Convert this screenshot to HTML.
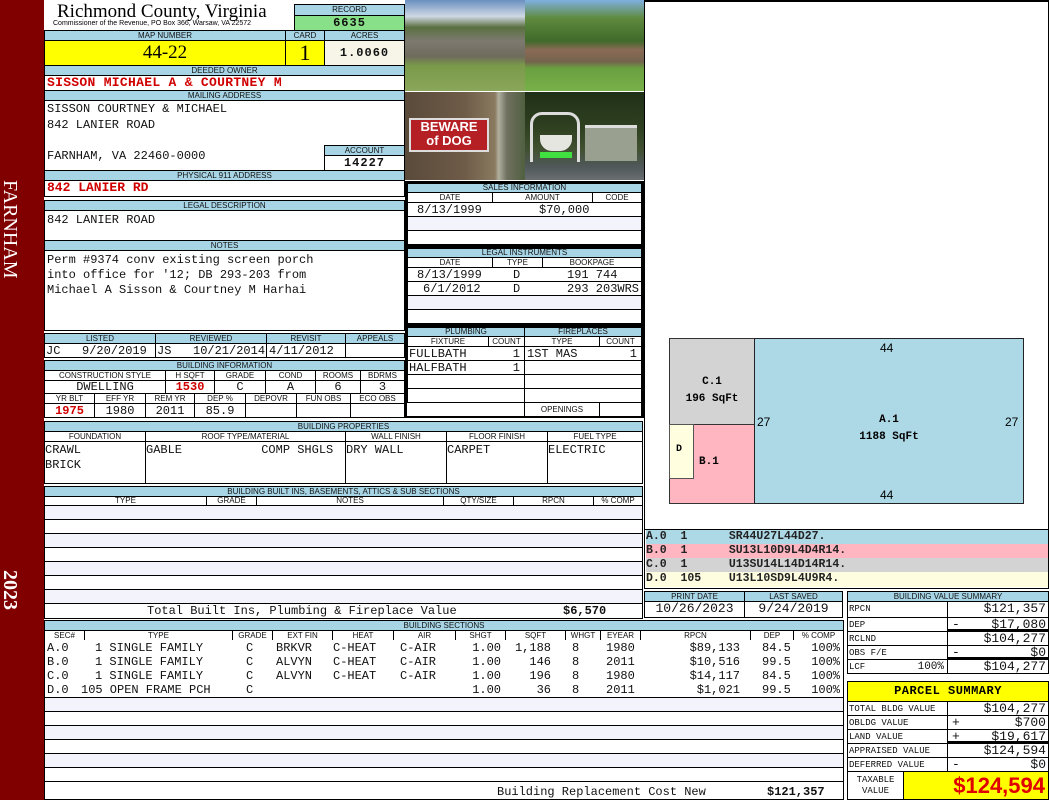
<!DOCTYPE html>
<html><head><meta charset="utf-8"><style>
body{margin:0;width:1050px;height:800px;position:relative;overflow:hidden;background:#fff;font-family:"Liberation Sans",sans-serif}
.a{position:absolute;box-sizing:border-box}
.h{position:absolute;box-sizing:border-box;background:#a8d5e5;border:1px solid #000;font:8px/9px "Liberation Sans",sans-serif;text-align:center;color:#111;white-space:nowrap;overflow:hidden}
.c{position:absolute;box-sizing:border-box;border:1px solid #000;background:#fff;white-space:nowrap;overflow:hidden}
.m{font-family:"Liberation Mono",monospace;font-size:12px;line-height:14px;color:#111}
.r{text-align:right}.ct{text-align:center}
.red{color:#d00000;font-weight:bold}
.sh{background:#f3f3fb}
.row span{position:absolute;top:0}
</style></head><body>
<div class="a" style="left:0;top:0;width:44px;height:800px;background:#800000"></div>
<div class="a" style="left:22px;top:180px;width:0;height:0"><div style="position:absolute;left:-12px;top:0;transform-origin:0 0;transform:rotate(90deg) translate(0,-12px);font:20px/24px 'Liberation Serif',serif;color:#fff;white-space:nowrap;width:120px">FARNHAM</div></div>
<div class="a" style="left:22px;top:570px;width:0;height:0"><div style="position:absolute;left:-12px;top:0;transform-origin:0 0;transform:rotate(90deg) translate(0,-12px);font:bold 20px/24px 'Liberation Serif',serif;color:#fff;white-space:nowrap">2023</div></div>
<div class="a" style="left:57px;top:2px;font:19px/20px 'Liberation Serif',serif;color:#000">Richmond County, Virginia</div>
<div class="a" style="left:53px;top:20px;font:7px/8px 'Liberation Sans',sans-serif">Commissioner of the Revenue, PO Box 366, Warsaw, VA 22572</div>
<div class="h" style="left:294px;top:4px;width:111px;height:12px;line-height:10px">RECORD</div>
<div class="c m ct" style="left:294px;top:15px;width:111px;height:16px;background:#88e088;font-weight:bold;letter-spacing:1px">6635</div>
<div class="h" style="left:44px;top:30px;width:242px;height:11px">MAP NUMBER</div>
<div class="h" style="left:285px;top:30px;width:40px;height:11px">CARD</div>
<div class="h" style="left:324px;top:30px;width:81px;height:11px">ACRES</div>
<div class="c ct" style="left:44px;top:40px;width:242px;height:26px;background:#ffff00;font:19px/24px 'Liberation Serif',serif">44-22</div>
<div class="c ct" style="left:285px;top:40px;width:40px;height:26px;background:#ffff00;font:22px/24px 'Liberation Serif',serif">1</div>
<div class="c m ct" style="left:324px;top:40px;width:81px;height:26px;background:#f7f5e8;font-weight:bold;line-height:24px;letter-spacing:1px">1.0060</div>
<div class="h" style="left:44px;top:65px;width:361px;height:11px">DEEDED OWNER</div>
<div class="c m" style="left:44px;top:75px;width:361px;height:16px;color:#d00000;font-weight:bold;font-size:13px;padding-left:2px;letter-spacing:.3px">SISSON MICHAEL A &amp; COURTNEY M</div>
<div class="h" style="left:44px;top:90px;width:361px;height:11px">MAILING ADDRESS</div>
<div class="c m" style="left:44px;top:100px;width:361px;height:71px;padding:1px 2px;line-height:15.5px">SISSON COURTNEY &amp; MICHAEL<br>842 LANIER ROAD<br><br>FARNHAM, VA 22460-0000</div>
<div class="h" style="left:324px;top:145px;width:81px;height:11px">ACCOUNT</div>
<div class="c m ct" style="left:324px;top:155px;width:81px;height:16px;font-weight:bold;letter-spacing:1px">14227</div>
<div class="h" style="left:44px;top:170px;width:361px;height:11px">PHYSICAL 911 ADDRESS</div>
<div class="c m" style="left:44px;top:180px;width:361px;height:17px;color:#d00000;font-weight:bold;font-size:13px;padding-left:2px">842 LANIER RD</div>
<div class="h" style="left:44px;top:200px;width:361px;height:11px">LEGAL DESCRIPTION</div>
<div class="c m" style="left:44px;top:210px;width:361px;height:31px;padding:2px">842 LANIER ROAD</div>
<div class="h" style="left:44px;top:240px;width:361px;height:11px">NOTES</div>
<div class="c m" style="left:44px;top:250px;width:361px;height:81px;padding:2px;line-height:15px">Perm #9374 conv existing screen porch<br>into office for '12; DB 293-203 from<br>Michael A Sisson &amp; Courtney M Harhai</div>
<div class="h" style="left:44px;top:333px;width:112px;height:11px">LISTED</div>
<div class="h" style="left:155px;top:333px;width:112px;height:11px">REVIEWED</div>
<div class="h" style="left:266px;top:333px;width:80px;height:11px">REVISIT</div>
<div class="h" style="left:345px;top:333px;width:60px;height:11px">APPEALS</div>
<div class="c m" style="left:44px;top:343px;width:112px;height:15px;padding-left:1px">JC &nbsp;&nbsp;9/20/2019</div>
<div class="c m" style="left:155px;top:343px;width:112px;height:15px;padding-left:1px">JS &nbsp;&nbsp;10/21/2014</div>
<div class="c m" style="left:266px;top:343px;width:80px;height:15px;padding-left:2px">4/11/2012</div>
<div class="c m" style="left:345px;top:343px;width:60px;height:15px"></div>
<div class="h" style="left:44px;top:360px;width:361px;height:11px">BUILDING INFORMATION</div>
<div class="h" style="left:44px;top:370px;width:122px;height:11px;background:#fff">CONSTRUCTION STYLE</div>
<div class="h" style="left:165px;top:370px;width:50px;height:11px;background:#fff">H SQFT</div>
<div class="h" style="left:214px;top:370px;width:52px;height:11px;background:#fff">GRADE</div>
<div class="h" style="left:265px;top:370px;width:51px;height:11px;background:#fff">COND</div>
<div class="h" style="left:315px;top:370px;width:46px;height:11px;background:#fff">ROOMS</div>
<div class="h" style="left:360px;top:370px;width:45px;height:11px;background:#fff">BDRMS</div>
<div class="c m ct" style="left:44px;top:380px;width:122px;height:14px;line-height:13px">DWELLING</div>
<div class="c m ct red" style="left:165px;top:380px;width:50px;height:14px;line-height:13px">1530</div>
<div class="c m ct" style="left:214px;top:380px;width:52px;height:14px;line-height:13px">C</div>
<div class="c m ct" style="left:265px;top:380px;width:51px;height:14px;line-height:13px">A</div>
<div class="c m ct" style="left:315px;top:380px;width:46px;height:14px;line-height:13px">6</div>
<div class="c m ct" style="left:360px;top:380px;width:45px;height:14px;line-height:13px">3</div>
<div class="h" style="left:44px;top:393px;width:51px;height:11px;background:#fff">YR BLT</div>
<div class="h" style="left:94px;top:393px;width:52px;height:11px;background:#fff">EFF YR</div>
<div class="h" style="left:145px;top:393px;width:50px;height:11px;background:#fff">REM YR</div>
<div class="h" style="left:194px;top:393px;width:52px;height:11px;background:#fff">DEP %</div>
<div class="h" style="left:245px;top:393px;width:52px;height:11px;background:#fff">DEPOVR</div>
<div class="h" style="left:296px;top:393px;width:55px;height:11px;background:#fff">FUN OBS</div>
<div class="h" style="left:350px;top:393px;width:55px;height:11px;background:#fff">ECO OBS</div>
<div class="c m ct red" style="left:44px;top:403px;width:51px;height:15px">1975</div>
<div class="c m ct" style="left:94px;top:403px;width:52px;height:15px">1980</div>
<div class="c m ct" style="left:145px;top:403px;width:50px;height:15px">2011</div>
<div class="c m ct" style="left:194px;top:403px;width:52px;height:15px">85.9</div>
<div class="c" style="left:245px;top:403px;width:52px;height:15px"></div>
<div class="c" style="left:296px;top:403px;width:55px;height:15px"></div>
<div class="c" style="left:350px;top:403px;width:55px;height:15px"></div>
<div class="h" style="left:44px;top:421px;width:599px;height:11px">BUILDING PROPERTIES</div>
<div class="h" style="left:44px;top:431px;width:102px;height:11px;background:#fff">FOUNDATION</div>
<div class="h" style="left:145px;top:431px;width:201px;height:11px;background:#fff">ROOF TYPE/MATERIAL</div>
<div class="h" style="left:345px;top:431px;width:102px;height:11px;background:#fff">WALL FINISH</div>
<div class="h" style="left:446px;top:431px;width:102px;height:11px;background:#fff">FLOOR FINISH</div>
<div class="h" style="left:547px;top:431px;width:96px;height:11px;background:#fff">FUEL TYPE</div>
<div class="c m" style="left:44px;top:441px;width:102px;height:43px;line-height:15px;padding-top:1px">CRAWL<br>BRICK</div>
<div class="c m" style="left:145px;top:441px;width:201px;height:43px;padding-top:1px">GABLE &nbsp;&nbsp;&nbsp;&nbsp;&nbsp;&nbsp;&nbsp;&nbsp;&nbsp;&nbsp;COMP SHGLS</div>
<div class="c m" style="left:345px;top:441px;width:102px;height:43px;padding-top:1px">DRY WALL</div>
<div class="c m" style="left:446px;top:441px;width:102px;height:43px;padding-top:1px">CARPET</div>
<div class="c m" style="left:547px;top:441px;width:96px;height:43px;padding-top:1px">ELECTRIC</div>
<div class="h" style="left:44px;top:486px;width:599px;height:11px">BUILDING BUILT INS, BASEMENTS, ATTICS &amp; SUB SECTIONS</div>
<div class="h" style="left:44px;top:496px;width:163px;height:10px;line-height:8px;background:#fff">TYPE</div>
<div class="h" style="left:206px;top:496px;width:51px;height:10px;line-height:8px;background:#fff">GRADE</div>
<div class="h" style="left:256px;top:496px;width:188px;height:10px;line-height:8px;background:#fff">NOTES</div>
<div class="h" style="left:443px;top:496px;width:71px;height:10px;line-height:8px;background:#fff">QTY/SIZE</div>
<div class="h" style="left:513px;top:496px;width:81px;height:10px;line-height:8px;background:#fff">RPCN</div>
<div class="h" style="left:593px;top:496px;width:50px;height:10px;line-height:8px;background:#fff">% COMP</div>
<div class="c sh" style="left:44px;top:505px;width:599px;height:15px"></div>
<div class="c" style="left:44px;top:519px;width:599px;height:15px"></div>
<div class="c sh" style="left:44px;top:533px;width:599px;height:15px"></div>
<div class="c" style="left:44px;top:547px;width:599px;height:15px"></div>
<div class="c sh" style="left:44px;top:561px;width:599px;height:15px"></div>
<div class="c" style="left:44px;top:575px;width:599px;height:15px"></div>
<div class="c sh" style="left:44px;top:589px;width:599px;height:15px"></div>
<div class="c m" style="left:44px;top:603px;width:599px;height:16px;"><span style="position:absolute;left:102px;top:0">Total Built Ins, Plumbing &amp; Fireplace Value</span><span style="position:absolute;left:518px;top:0;font-weight:bold">$6,570</span></div>
<div class="h" style="left:44px;top:620px;width:800px;height:11px">BUILDING SECTIONS</div>
<div class="h" style="left:44px;top:630px;width:41px;height:11px;background:#fff">SEC#</div>
<div class="h" style="left:84px;top:630px;width:149px;height:11px;background:#fff">TYPE</div>
<div class="h" style="left:232px;top:630px;width:41px;height:11px;background:#fff">GRADE</div>
<div class="h" style="left:272px;top:630px;width:61px;height:11px;background:#fff">EXT FIN</div>
<div class="h" style="left:332px;top:630px;width:62px;height:11px;background:#fff">HEAT</div>
<div class="h" style="left:393px;top:630px;width:63px;height:11px;background:#fff">AIR</div>
<div class="h" style="left:455px;top:630px;width:51px;height:11px;background:#fff">SHGT</div>
<div class="h" style="left:505px;top:630px;width:61px;height:11px;background:#fff">SQFT</div>
<div class="h" style="left:565px;top:630px;width:36px;height:11px;background:#fff">WHGT</div>
<div class="h" style="left:600px;top:630px;width:41px;height:11px;background:#fff">EYEAR</div>
<div class="h" style="left:640px;top:630px;width:111px;height:11px;background:#fff">RPCN</div>
<div class="h" style="left:750px;top:630px;width:44px;height:11px;background:#fff">DEP</div>
<div class="h" style="left:793px;top:630px;width:51px;height:11px;background:#fff">% COMP</div>
<div class="c" style="left:44px;top:640px;width:800px;height:58px;border-top:none"></div>
<div class="a m row" style="left:0;top:641px;width:850px;height:14px"><span style="left:47px">A.0</span><span style="left:95px">1 SINGLE FAMILY</span><span style="left:246px">C</span><span style="left:276px">BRKVR</span><span style="left:333px">C-HEAT</span><span style="left:400px">C-AIR</span><span style="right:349px">1.00</span><span style="right:299px">1,188</span><span style="left:572px">8</span><span style="left:606px">1980</span><span style="right:110px">$89,133</span><span style="left:762px">84.5</span><span style="right:10px">100%</span></div>
<div class="a m row" style="left:0;top:655px;width:850px;height:14px"><span style="left:47px">B.0</span><span style="left:95px">1 SINGLE FAMILY</span><span style="left:246px">C</span><span style="left:276px">ALVYN</span><span style="left:333px">C-HEAT</span><span style="left:400px">C-AIR</span><span style="right:349px">1.00</span><span style="right:299px">146</span><span style="left:572px">8</span><span style="left:606px">2011</span><span style="right:110px">$10,516</span><span style="left:762px">99.5</span><span style="right:10px">100%</span></div>
<div class="a m row" style="left:0;top:669px;width:850px;height:14px"><span style="left:47px">C.0</span><span style="left:95px">1 SINGLE FAMILY</span><span style="left:246px">C</span><span style="left:276px">ALVYN</span><span style="left:333px">C-HEAT</span><span style="left:400px">C-AIR</span><span style="right:349px">1.00</span><span style="right:299px">196</span><span style="left:572px">8</span><span style="left:606px">1980</span><span style="right:110px">$14,117</span><span style="left:762px">84.5</span><span style="right:10px">100%</span></div>
<div class="a m row" style="left:0;top:683px;width:850px;height:14px"><span style="left:47px">D.0</span><span style="left:81px">105 OPEN FRAME PCH</span><span style="left:246px">C</span><span style="right:349px">1.00</span><span style="right:299px">36</span><span style="left:572px">8</span><span style="left:606px">2011</span><span style="right:110px">$1,021</span><span style="left:762px">99.5</span><span style="right:10px">100%</span></div>
<div class="c sh" style="left:44px;top:697px;width:800px;height:15px"></div>
<div class="c" style="left:44px;top:711px;width:800px;height:15px"></div>
<div class="c sh" style="left:44px;top:725px;width:800px;height:15px"></div>
<div class="c" style="left:44px;top:739px;width:800px;height:15px"></div>
<div class="c sh" style="left:44px;top:753px;width:800px;height:15px"></div>
<div class="c" style="left:44px;top:767px;width:800px;height:15px"></div>
<div class="c m" style="left:44px;top:781px;width:800px;height:19px"><span style="position:absolute;left:452px;top:3px">Building Replacement Cost New</span><span style="position:absolute;left:722px;top:3px;font-weight:bold">$121,357</span></div>
<div class="a" style="left:405px;top:0;width:120px;height:91px;background:linear-gradient(180deg,#6a8fc0 0%,#cfd8e4 18%,#5a7040 30%,#7d7a70 45%,#6f6b5c 62%,#7a9a4a 72%,#8aa65a 100%)"></div>
<div class="a" style="left:525px;top:0;width:119px;height:91px;background:linear-gradient(180deg,#7fb0e0 0%,#5f8a3e 20%,#3f6a2a 45%,#8a6a55 55%,#74644e 68%,#6aa040 75%,#78b048 100%)"></div>
<div class="a" style="left:405px;top:92px;width:120px;height:88px;background:linear-gradient(90deg,#5a4a3a 0%,#6e5c48 50%,#8a7a60 75%,#b0b0a0 78%,#707060 85%,#506040 100%)"></div>
<div class="a" style="left:409px;top:118px;width:80px;height:34px;background:#b52025;border:2px solid #ddd;color:#fff;font:bold 13px/14px 'Liberation Sans',sans-serif;text-align:center">BEWARE<br>of DOG</div>
<div class="a" style="left:525px;top:92px;width:119px;height:88px;background:linear-gradient(180deg,#203018 0%,#2e4020 40%,#405030 65%,#50585a 85%,#6a6e70 100%)"></div>
<div class="a" style="left:530px;top:112px;width:50px;height:50px;border:3px solid #ddd;border-bottom:none;border-radius:12px 12px 0 0"></div>
<div class="a" style="left:540px;top:135px;width:32px;height:16px;background:#e6e6e0;border-radius:0 0 12px 12px"></div>
<div class="a" style="left:540px;top:152px;width:32px;height:6px;background:#40e040"></div>
<div class="a" style="left:585px;top:125px;width:52px;height:36px;background:#9aa090;border-top:3px solid #ddd"></div>
<div class="c" style="left:644px;top:0;width:405px;height:530px;border-top:2px solid #000"></div>
<div class="c" style="left:405px;top:181px;width:239px;height:66px;border:2px solid #000"></div>
<div class="h" style="left:407px;top:183px;width:235px;height:10px;line-height:8px">SALES INFORMATION</div>
<div class="h" style="left:407px;top:192px;width:86px;height:11px;background:#fff">DATE</div>
<div class="h" style="left:492px;top:192px;width:101px;height:11px;background:#fff">AMOUNT</div>
<div class="h" style="left:592px;top:192px;width:50px;height:11px;background:#fff">CODE</div>
<div class="c m" style="left:407px;top:202px;width:235px;height:15px"><span style="position:absolute;left:9px">8/13/1999</span><span style="position:absolute;left:131px">$70,000</span></div>
<div class="c sh" style="left:407px;top:216px;width:235px;height:15px"></div>
<div class="c" style="left:407px;top:230px;width:235px;height:15px"></div>
<div class="c" style="left:405px;top:246px;width:239px;height:80px;border:2px solid #000"></div>
<div class="h" style="left:407px;top:248px;width:235px;height:10px;line-height:8px">LEGAL INSTRUMENTS</div>
<div class="h" style="left:407px;top:257px;width:86px;height:11px;background:#fff">DATE</div>
<div class="h" style="left:492px;top:257px;width:51px;height:11px;background:#fff">TYPE</div>
<div class="h" style="left:542px;top:257px;width:100px;height:11px;background:#fff">BOOKPAGE</div>
<div class="c m" style="left:407px;top:267px;width:235px;height:15px"><span style="position:absolute;left:9px">8/13/1999</span><span style="position:absolute;left:105px">D</span><span style="position:absolute;left:159px">191 744</span></div>
<div class="c m" style="left:407px;top:281px;width:235px;height:15px"><span style="position:absolute;left:15px">6/1/2012</span><span style="position:absolute;left:105px">D</span><span style="position:absolute;left:159px">293 203WRS</span></div>
<div class="c sh" style="left:407px;top:295px;width:235px;height:15px"></div>
<div class="c" style="left:407px;top:309px;width:235px;height:15px"></div>
<div class="c" style="left:405px;top:325px;width:239px;height:93px;border:2px solid #000"></div>
<div class="h" style="left:407px;top:327px;width:118px;height:10px;line-height:8px">PLUMBING</div>
<div class="h" style="left:524px;top:327px;width:118px;height:10px;line-height:8px">FIREPLACES</div>
<div class="h" style="left:407px;top:336px;width:82px;height:11px;background:#fff">FIXTURE</div>
<div class="h" style="left:488px;top:336px;width:37px;height:11px;background:#fff">COUNT</div>
<div class="h" style="left:524px;top:336px;width:76px;height:11px;background:#fff">TYPE</div>
<div class="h" style="left:599px;top:336px;width:43px;height:11px;background:#fff">COUNT</div>
<div class="c m" style="left:407px;top:346px;width:118px;height:15px"><span style="position:absolute;left:1px">FULLBATH</span><span style="position:absolute;right:4px">1</span></div>
<div class="c m" style="left:407px;top:360px;width:118px;height:15px"><span style="position:absolute;left:1px">HALFBATH</span><span style="position:absolute;right:4px">1</span></div>
<div class="c" style="left:407px;top:374px;width:118px;height:15px"></div>
<div class="c" style="left:407px;top:388px;width:118px;height:15px"></div>
<div class="c m" style="left:524px;top:346px;width:118px;height:15px"><span style="position:absolute;left:2px">1ST MAS</span><span style="position:absolute;right:4px">1</span></div>
<div class="c" style="left:524px;top:360px;width:118px;height:15px"></div>
<div class="c" style="left:524px;top:374px;width:118px;height:15px"></div>
<div class="c" style="left:524px;top:388px;width:118px;height:15px"></div>
<div class="h" style="left:524px;top:402px;width:76px;height:15px;background:#fff;line-height:13px">OPENINGS</div>
<div class="c" style="left:599px;top:402px;width:43px;height:15px"></div>
<div class="a" style="left:669px;top:338px;width:355px;height:166px;border:1px solid #222;background:#add8e6"></div>
<div class="a" style="left:669px;top:338px;width:86px;height:87px;border:1px solid #333;background:#d3d3d3"></div>
<div class="a" style="left:669px;top:424px;width:86px;height:80px;border:1px solid #333;background:#ffb6c1"></div>
<div class="a" style="left:669px;top:424px;width:25px;height:55px;border:1px solid #555;background:#ffffe0"></div>
<div class="a" style="left:754px;top:338px;width:1px;height:166px;background:#222"></div>
<div class="a" style="left:669px;top:374px;width:86px;font:bold 11px/17px 'Liberation Mono',monospace;text-align:center">C.1<br>196 SqFt</div>
<div class="a" style="left:754px;top:412px;width:270px;font:bold 11px/17px 'Liberation Mono',monospace;text-align:center">A.1<br>1188 SqFt</div>
<div class="a" style="left:676px;top:444px;font:bold 10px 'Liberation Mono',monospace">D</div>
<div class="a" style="left:699px;top:456px;font:bold 11px 'Liberation Mono',monospace">B.1</div>
<div class="a" style="left:880px;top:341px;font:12px 'Liberation Sans',sans-serif">44</div>
<div class="a" style="left:880px;top:488px;font:12px 'Liberation Sans',sans-serif">44</div>
<div class="a" style="left:757px;top:415px;font:12px 'Liberation Sans',sans-serif">27</div>
<div class="a" style="left:1005px;top:415px;font:12px 'Liberation Sans',sans-serif">27</div>
<div class="c" style="left:644px;top:529px;width:405px;height:60px;border:1px solid #000"></div>
<pre class="a" style="margin:0;left:646px;top:530px;width:402px;height:14px;background:#add8e6;font:bold 11.5px/14px 'Liberation Mono',monospace;color:#222">A.0  1      SR44U27L44D27.</pre>
<pre class="a" style="margin:0;left:646px;top:544px;width:402px;height:14px;background:#ffb6c1;font:bold 11.5px/14px 'Liberation Mono',monospace;color:#222">B.0  1      SU13L10D9L4D4R14.</pre>
<pre class="a" style="margin:0;left:646px;top:558px;width:402px;height:14px;background:#d3d3d3;font:bold 11.5px/14px 'Liberation Mono',monospace;color:#222">C.0  1      U13SU14L14D14R14.</pre>
<pre class="a" style="margin:0;left:646px;top:572px;width:402px;height:15px;background:#fffde0;font:bold 11.5px/14px 'Liberation Mono',monospace;color:#222">D.0  105    U13L10SD9L4U9R4.</pre>
<div class="h" style="left:644px;top:591px;width:101px;height:11px">PRINT DATE</div>
<div class="h" style="left:744px;top:591px;width:99px;height:11px">LAST SAVED</div>
<div class="c m ct" style="left:644px;top:601px;width:101px;height:17px;font-size:13px">10/26/2023</div>
<div class="c m ct" style="left:744px;top:601px;width:99px;height:17px;font-size:13px">9/24/2019</div>
<div class="h" style="left:847px;top:591px;width:202px;height:11px">BUILDING VALUE SUMMARY</div>
<div class="c m" style="left:847px;top:601px;width:101px;height:17px;font-size:9px;padding-left:1px">RPCN</div>
<div class="c m r" style="left:947px;top:601px;width:102px;height:17px;font-size:13px;padding-right:2px">$121,357</div>
<div class="c m" style="left:847px;top:617px;width:101px;height:15px;font-size:9px;padding-left:1px">DEP</div>
<div class="c m r" style="left:947px;top:617px;width:102px;height:15px;font-size:13px;padding-right:2px;border-bottom:3px solid #000"><span style="position:absolute;left:4px">-</span>$17,080</div>
<div class="c m" style="left:847px;top:631px;width:101px;height:15px;font-size:9px;padding-left:1px">RCLND</div>
<div class="c m r" style="left:947px;top:631px;width:102px;height:15px;font-size:13px;padding-right:2px">$104,277</div>
<div class="c m" style="left:847px;top:645px;width:101px;height:15px;font-size:9px;padding-left:1px">OBS F/E</div>
<div class="c m r" style="left:947px;top:645px;width:102px;height:15px;font-size:13px;padding-right:2px;border-bottom:3px solid #000"><span style="position:absolute;left:4px">-</span>$0</div>
<div class="c m" style="left:847px;top:659px;width:101px;height:15px;font-size:9px;padding-left:1px">LCF<span style="position:absolute;right:3px;font-size:11px">100%</span></div>
<div class="c m r" style="left:947px;top:659px;width:102px;height:15px;font-size:13px;padding-right:2px">$104,277</div>
<div class="c ct" style="left:847px;top:681px;width:202px;height:21px;background:#ffff00;font:bold 12px/19px 'Liberation Mono',monospace;letter-spacing:.5px">PARCEL SUMMARY</div>
<div class="c m" style="left:847px;top:701px;width:101px;height:15px;font-size:9px;padding-left:1px">TOTAL BLDG VALUE</div>
<div class="c m r" style="left:947px;top:701px;width:102px;height:15px;font-size:13px;padding-right:2px">$104,277</div>
<div class="c m" style="left:847px;top:715px;width:101px;height:15px;font-size:9px;padding-left:1px">OBLDG VALUE</div>
<div class="c m r" style="left:947px;top:715px;width:102px;height:15px;font-size:13px;padding-right:2px"><span style="position:absolute;left:4px">+</span>$700</div>
<div class="c m" style="left:847px;top:729px;width:101px;height:15px;font-size:9px;padding-left:1px">LAND VALUE</div>
<div class="c m r" style="left:947px;top:729px;width:102px;height:15px;font-size:13px;padding-right:2px;border-bottom:3px solid #000"><span style="position:absolute;left:4px">+</span>$19,617</div>
<div class="c m" style="left:847px;top:743px;width:101px;height:15px;font-size:9px;padding-left:1px">APPRAISED VALUE</div>
<div class="c m r" style="left:947px;top:743px;width:102px;height:15px;font-size:13px;padding-right:2px">$124,594</div>
<div class="c m" style="left:847px;top:757px;width:101px;height:15px;font-size:9px;padding-left:1px">DEFERRED VALUE</div>
<div class="c m r" style="left:947px;top:757px;width:102px;height:15px;font-size:13px;padding-right:2px"><span style="position:absolute;left:4px">-</span>$0</div>
<div class="c m ct" style="left:847px;top:771px;width:57px;height:29px;font-size:9px;line-height:11px;padding-top:3px">TAXABLE<br>VALUE</div>
<div class="c r" style="left:903px;top:771px;width:146px;height:29px;background:#ffff00;color:#e00000;font:bold 22px/27px 'Liberation Sans',sans-serif;padding-right:3px">$124,594</div>
</body></html>
